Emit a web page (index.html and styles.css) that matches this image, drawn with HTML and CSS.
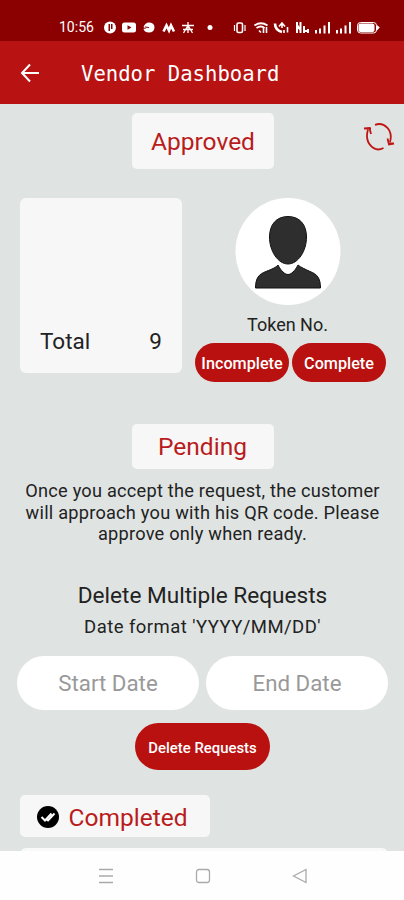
FILE: index.html
```html
<!DOCTYPE html>
<html lang="en">
<head>
    <meta charset="UTF-8">
    <meta name="viewport" content="width=device-width, initial-scale=1.0">
    <title>Vendor Dashboard</title>
    <link rel="stylesheet" href="styles.css">
</head>
<body>
    <div class="status-bar">
        <span class="clock">10:56</span>
        <svg class="status-icons" width="326" height="42" viewBox="78 0 326 42">
            <g fill="#fff">
                <circle cx="110" cy="27.5" r="6"/>
                <path d="M108.500 24h1.500v7h-1.500zM111 24h1.500v5h-1.500z" fill="#8b0000"/>
                <rect x="122" y="22.5" width="14" height="10" rx="2.5"/>
                <path d="M127.500 25.300v4.400l4-2.200z" fill="#8b0000"/>
                <path d="M143.500 27q2-5 6-4.500q5 .5 5 5q-.5 5-5.500 5q-5 0-5.500-4l3 .5z"/>
                <path d="M145 27l4 .5" stroke="#8b0000"/>
            </g>
            <g fill="none" stroke="#fff">
                <path d="M163.500 31.500l3-6 2.500 5 2-5 3 6" stroke-width="2.600"/>
                <path d="M188 22v11M182 25.500h12M183.500 33l4.500-7.500 4.500 7.500M183 29.500h10" stroke-width="1.300"/>
                <rect x="237" y="23" width="5.500" height="9.500" rx="1.500" stroke-width="1.600"/>
                <path d="M234.500 25v6M245 25v6" stroke-width="1.200"/>
                <path d="M254.500 25.500q6.500-4.500 13 0M256.500 28q4.500-3 8 0" stroke-width="1.800"/>
                <path d="M259 30.500l2 2M263.500 28v5M266.500 27v6" stroke-width="1.600"/>
                <path d="M275 23.500q0 6.500 7 8.500" stroke-width="2.600"/>
                <path d="M279 26.500l3-3.500 3 3.500M282 23v5M287.500 27v5.500M284 30v3" stroke-width="1.600"/>
                <path d="M297 22v11M300.500 22v11M304 26v7M308 29v4M297 25l4 6M303 31h5" stroke-width="2"/>
            </g>
            <circle cx="210" cy="27.500" r="2.500" fill="#fff"/>
            <path d="M315 30h2v3.500h-2zM319 28.500h2v5h-2zM323.500 25.500h2v8h-2zM328 22h2v11.500h-2zM336 30h2v3.500h-2zM340 28.500h2v5h-2zM344.500 25.500h2v8h-2zM349 22h2v11.500h-2z" fill="#fff"/>
            <rect x="357.500" y="22.500" width="19" height="10.500" rx="3" fill="none" stroke="#fff"/>
            <rect x="358.500" y="23.500" width="16" height="8.500" rx="2" fill="#fff"/>
            <path d="M377 25l2.800 2.500-2.800 3z" fill="#fff"/>
        </svg>
    </div>

    <header class="app-bar">
        <svg width="20" height="20" viewBox="0 0 20 20" fill="none" stroke="#fff" stroke-width="2">
            <path d="M10 1.500L2 10l8 8.500M2 10h17"/>
        </svg>
        <h1>Vendor Dashboard</h1>
    </header>

    <main>
        <div class="top-row">
            <h2 class="tag approved">Approved</h2>
            <svg class="refresh" width="32" height="30" viewBox="0 0 32 30" fill="none" stroke="#c01515" stroke-width="1.800">
                <path d="M12 2.800C21 -.5 30.500 8 27 20M20.500 26C11 31 1 21 5 7.500"/>
                <path d="M1 6.500L6.500 6l1.500 6M1 6.500h7M31 21.500L26 22.500 24.500 16.500M31 21.500L25 21.500"/>
            </svg>
        </div>

        <section class="summary">
            <div class="card">
                <span>Total</span>
                <span>9</span>
            </div>
            <div class="customer">
                <svg width="106" height="107" viewBox="0 0 106 107">
                    <ellipse cx="53" cy="53.500" rx="52.500" ry="53.500" fill="#fff"/>
                    <g fill="#2e2e2e" stroke="#111">
                        <path d="M53 18.500C41 18.500 34.500 27 34.500 39C34.500 53 43 66 53 66S71.500 53 71.500 39C71.500 27 65 18.500 53 18.500Z"/>
                        <path d="M20.500 90C20.500 80 24 76 31 73.500C37 71 41 69.500 43 67C46 73 50 76.500 53 76.500S60 73 63 67C66 69.500 70 71 75 73.500C82 76 85.500 80 85.500 90Z"/>
                    </g>
                </svg>
                <span class="token">Token No.</span>
                <div class="actions">
                    <button>Incomplete</button>
                    <button>Complete</button>
                </div>
            </div>
        </section>

        <section class="pending">
            <h2 class="tag">Pending</h2>
            <p>Once you accept the request, the customer<br>will approach you with his QR code. Please<br>approve only when ready.</p>
        </section>

        <section class="delete">
            <h3>Delete Multiple Requests</h3>
            <p>Date format 'YYYY/MM/DD'</p>
            <div class="dates">
                <input type="text" placeholder="Start Date">
                <input type="text" placeholder="End Date">
            </div>
            <button>Delete Requests</button>
        </section>

        <h2 class="tag completed">
            <svg width="22" height="22" viewBox="0 0 22 22">
                <circle cx="11" cy="11" r="11"/>
                <path d="M4.500 11l3.500 3.500 6.500-7M9.500 13.500l1.500 1 6.500-7" fill="none" stroke="#fff" stroke-width="2"/>
            </svg>
            Completed
        </h2>
        <div class="list-card"></div>
    </main>

    <nav class="nav-bar">
        <svg width="16" height="16" viewBox="0 0 16 16"><path d="M1 1.500h14M1 8h14M1 14.500h14"/></svg>
        <svg width="16" height="16" viewBox="0 0 16 16"><rect x="1.500" y="1.500" width="13" height="13" rx="2.500"/></svg>
        <svg width="16" height="16" viewBox="0 0 16 16"><path d="M14 1.500v13L1.500 8z"/></svg>
    </nav>
</body>
</html>
```

FILE: styles.css
```css
* {
    box-sizing: border-box;
}
body {
    margin: 0;
    height: 900px;
    display: flex;
    flex-direction: column;
    font-family: Roboto, sans-serif;
    background-color: #dfe4e2;
    color: #222;
    overflow: hidden;
}
h1, h2, h3, p {
    margin: 0;
    font-weight: 400;
}
svg {
    display: block;
    flex-shrink: 0;
}
.status-bar {
    height: 41px;
    padding-left: 59px;
    display: flex;
    background-color: #8b0000;
    color: #fff;
}
.clock {
    width: 19px;
    line-height: 55px;
    font-size: 14px;
    white-space: nowrap;
}
.app-bar {
    height: 63px;
    padding-left: 20px;
    display: flex;
    align-items: center;
    gap: 41px;
    background-color: #b91212;
    color: #fff;
}
.app-bar h1 {
    padding-top: 3px;
    font-family: "DejaVu Sans Mono", monospace;
    font-size: 20.6px;
    line-height: 24px;
    white-space: nowrap;
}
main {
    height: 747px;
    padding-top: 9px;
    overflow: hidden;
}
.tag {
    width: 142px;
    height: 45px;
    display: flex;
    align-items: center;
    justify-content: center;
    border-radius: 5px;
    background-color: #f7f7f7;
    color: #b91c1c;
    font-size: 24.5px;
}
.top-row {
    display: flex;
    justify-content: space-between;
    padding: 0 9px 0 132px;
}
.approved {
    height: 56px;
}
.refresh {
    margin-top: 9px;
}
.summary {
    display: flex;
    gap: 13px;
    padding: 29px 18px 0 20px;
}
.card {
    width: 162px;
    height: 175px;
    padding: 0 20px 19px;
    display: flex;
    align-items: flex-end;
    justify-content: space-between;
    border-radius: 6px;
    background-color: #f7f7f7;
    font-size: 22.5px;
}
.customer {
    width: 191px;
    display: flex;
    flex-direction: column;
    align-items: center;
}
.customer svg,
.token {
    margin-right: 6px;
}
.token {
    margin-top: 8px;
    margin-bottom: 7px;
    font-size: 18px;
    line-height: 23px;
}
.actions {
    display: flex;
    gap: 3px;
}
button {
    border: none;
    border-radius: 24px;
    padding: 0;
    background-color: #b91010;
    color: #fff;
    font-family: inherit;
    font-weight: 500;
}
.actions button {
    width: 94px;
    height: 39px;
    padding-top: 2px;
    font-size: 16.2px;
}
.pending {
    margin-top: 42px;
    padding-left: 1px;
    display: flex;
    flex-direction: column;
    align-items: center;
}
.pending p {
    margin-top: 11px;
    font-size: 18.2px;
    letter-spacing: 0.23px;
    line-height: 21.7px;
    text-align: center;
    white-space: nowrap;
}
.delete {
    margin-top: 37px;
    padding-left: 1px;
    display: flex;
    flex-direction: column;
    align-items: center;
}
.delete h3 {
    font-size: 22.6px;
    line-height: 28px;
}
.delete p {
    margin-top: 6px;
    font-size: 18.5px;
    letter-spacing: 0.45px;
    line-height: 22px;
}
.dates {
    display: flex;
    gap: 7px;
    margin: 18px 0 13px;
}
.dates input {
    width: 182px;
    height: 54px;
    padding: 2px;
    border: none;
    border-radius: 27px;
    background-color: #fff;
    font-family: inherit;
    font-size: 22.3px;
    text-align: center;
}
.dates input::placeholder {
    color: #999;
}
.delete button {
    width: 135px;
    height: 47px;
    padding-top: 2px;
    font-size: 14.9px;
}
.completed {
    width: 190px;
    height: 42px;
    margin: 25px 0 0 20px;
    padding: 2px 6px 0 0;
    gap: 10px;
}
.list-card {
    height: 40px;
    margin: 11px 16px 0 20px;
    border-radius: 6px;
    background-color: #f8f9f8;
}
.nav-bar {
    height: 49px;
    padding-left: 98px;
    display: flex;
    align-items: center;
    gap: 81px;
    background-color: #fefefe;
}
.nav-bar svg {
    fill: none;
    stroke: #aaa;
    stroke-width: 1.300;
}
```
